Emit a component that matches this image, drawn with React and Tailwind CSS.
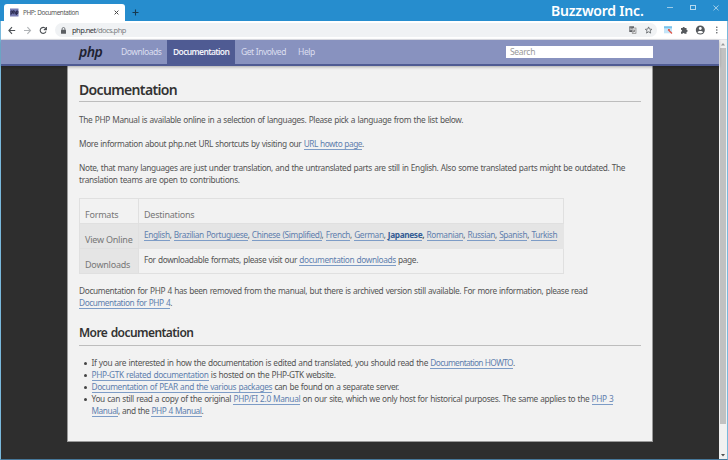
import React from "react";

function Link({ children, className = "" }) {
  return <a className={"inline-block h-[12px] border-b border-[#7d9cc6] leading-[12px] text-[#5f7fae] " + className}>{children}</a>;
}

function Line({ children, className = "" }) {
  return <div className={"h-[12px] whitespace-nowrap leading-[12px] [word-spacing:0.5px] " + className}>{children}</div>;
}

function Item({ children, className = "" }) {
  return (
    <li className="flex h-[12px] items-center">
      <span className="mr-[4.5px] ml-[5px] h-[3px] w-[3px] rounded-full bg-[#444]" />
      <Line className={className}>{children}</Line>
    </li>
  );
}

function HeadCell({ children, className = "" }) {
  return <div className={"border-r border-b border-[#e0e0e0] pt-[9px] pl-[5px] text-[9px] leading-[13px] tracking-[-0.22px] text-[#777] " + className}>{children}</div>;
}

function TitleBar() {
  return (
    <div className="flex h-[21px] items-end bg-[#268dce]">
      <div className="ml-[4px] flex h-[17px] w-[121px] items-center rounded-t-[3px] bg-white pl-[6px]">
        <svg width="9" height="9" viewBox="0 0 9 9">
          <rect y=".5" width="8.5" height="8" fill="#777bb3" />
          <path d="M1 6.8V3h1.6v2.2H1M3.8 2v4.2M3.8 3.8h1.5v2.4M6.4 7V3h1.5v2.4H6.4" fill="none" stroke="#222244" strokeWidth="0.9" />
        </svg>
        <span className="ml-[4px] w-[91px] text-[6.4px] leading-[10px] tracking-[-0.42px] [word-spacing:0.5px] whitespace-nowrap text-[#555]">PHP: Documentation</span>
        <svg className="mr-[6px] shrink-0" width="5" height="5" viewBox="0 0 5 5">
          <path d="M.6 .6L4.4 4.4M4.4 .6L.6 4.4" stroke="#444" strokeWidth="1" />
        </svg>
      </div>
      <svg className="mb-[5px] ml-[7px]" width="7" height="7" viewBox="0 0 7 7">
        <path d="M3.5 .5v6M.5 3.5h6" stroke="#17394f" strokeWidth="1.1" />
      </svg>
      <div className="ml-[412px] h-[21px] w-[94px] text-[14px] leading-[22px] font-semibold tracking-[-0.2px] whitespace-nowrap text-white">Buzzword Inc.</div>
      <svg className="mb-[10px] ml-[21px]" width="54" height="6" viewBox="0 0 54 6">
        <path d="M1 2.5h6" stroke="#9ccbe8" strokeWidth="1" />
        <rect x="24.5" y=".5" width="5" height="4" fill="none" stroke="#b5d9ef" />
        <path d="M47.5 .5l5 4.8M52.5 .5l-5 4.8" stroke="#a5d0ea" strokeWidth="1" />
      </svg>
    </div>
  );
}

function Toolbar() {
  return (
    <div className="flex h-[19px] items-center border-b border-[#e3e4ea] bg-white pl-[7px]">
      <svg width="40" height="9" viewBox="0 0 40 9" fill="none" strokeWidth="1.1">
        <path d="M7.2 4.5H1M4 1.2L.9 4.5 4 7.8" stroke="#4c5054" />
        <path d="M16 4.5h6.4M19.4 1.2l3.1 3.3-3.1 3.3" stroke="#b0b3b6" />
        <path d="M38 3.3A3 3 0 1 0 38 5.5M38.4 1v2.6h-2.6" stroke="#4c5054" />
      </svg>
      <div className="ml-[7px] flex h-[14px] w-[602px] items-center rounded-full bg-[#f0f2f4] pl-[6px]">
        <svg width="5" height="7" viewBox="0 0 5 7">
          <rect y="2.7" width="5" height="4" rx=".5" fill="#5c5f63" />
          <path d="M1.1 3V1.9a1.4 1.4 0 0 1 2.8 0V3" stroke="#5c5f63" strokeWidth=".8" fill="none" />
        </svg>
        <div className="ml-[6px] w-[557px] text-[7.5px] leading-[12px] tracking-[-0.54px] whitespace-nowrap text-[#7b7f83]">
          <span className="text-[#33363a]">php.net</span>/docs.php
        </div>
        <svg width="24" height="8" viewBox="0 0 24 8">
          <rect x=".3" y=".3" width="4.7" height="5.7" fill="#5c5f63" />
          <rect x="3.2" y="2" width="3.8" height="5.3" fill="#e8e9eb" stroke="#777" strokeWidth=".6" />
          <path d="M4 4h2.3M5.8 4c-.2 1-1 2-1.8 2.3M4.4 4.3l1.8 2" stroke="#777" strokeWidth=".5" />
          <path d="M1.2 3.2h2.2M3 3.2A1 1 0 1 1 2.6 2.2" stroke="#fff" strokeWidth=".5" fill="none" />
          <path d="M19.6 .9l.9 2.2 2.4.2-1.8 1.5.6 2.3-2.1-1.3-2.1 1.3.6-2.3-1.8-1.5 2.4-.2z" fill="none" stroke="#5c5f63" strokeWidth=".8" />
        </svg>
      </div>
      <svg className="ml-[7px]" width="56" height="10" viewBox="0 0 56 10">
        <rect y="1.3" width="8" height="7" fill="#c4e5f8" />
        <rect y="1.3" width="8" height="2" fill="#78c2ec" />
        <path d="M4 4.5l4 4M4 4.5l1.8.2" stroke="#e45243" strokeWidth="1.2" />
        <path d="M17 3h1.6a1.1 1.1 0 0 1 2.2 0h1.7v1.8a1.1 1.1 0 0 1 0 2.2v1.7h-1.9a1.1 1.1 0 0 0-2.1 0H17V6.8a1 1 0 0 0 0-2z" fill="#55595d" />
        <circle cx="36.3" cy="5" r="4.5" fill="#55595d" />
        <circle cx="36.3" cy="3.5" r="1.4" fill="#fff" />
        <path d="M33.5 7.2c.7-1.7 4.9-1.7 5.6 0-1 1.6-4.6 1.6-5.6 0z" fill="#fff" />
        <circle cx="52.8" cy="2.3" r=".8" fill="#55595d" />
        <circle cx="52.8" cy="5" r=".8" fill="#55595d" />
        <circle cx="52.8" cy="7.7" r=".8" fill="#55595d" />
      </svg>
    </div>
  );
}

function Nav() {
  return (
    <div className="relative z-10 flex h-[26px] border-b-2 border-[#4f5b93] bg-[#8892bf] text-[8.5px] leading-[23px] whitespace-nowrap text-[#dcdff0] shadow-[0_1px_3px_rgba(0,0,0,0.3)]">
      <div className="ml-[78px] w-[42px] text-[14px] leading-[23px] font-semibold tracking-[-0.55px] text-[#202231] italic">php</div>
      <div className="w-[46px] tracking-[-0.45px]">Downloads</div>
      <div className="h-[24px] w-[68px] bg-[#4f5b93] pl-[6px] font-semibold tracking-[-0.65px] text-[#f0f1f8]">Documentation</div>
      <div className="ml-[6px] w-[57px] tracking-[-0.5px] [word-spacing:0.5px]">Get Involved</div>
      <div className="tracking-[-0.4px]">Help</div>
      <div className="mt-[6px] ml-auto mr-[66px] h-[11.5px] w-[147px] bg-white pl-[4px] text-[8.5px] leading-[11px] tracking-[-0.3px] text-[#999]">Search</div>
    </div>
  );
}

function Page() {
  return (
    <main className="ml-[66px] h-[376px] w-[586px] border-x border-b border-[#999] bg-[#f2f2f2] pt-[14px] pl-[11px] text-[8.3px] text-[#555]">
      <h1 className="h-[22px] w-[562px] border-b border-[#bdbdbd] text-[14px] leading-[20px] font-semibold tracking-[-0.65px] text-[#333]">Documentation</h1>
      <Line className="mt-[12px] tracking-[-0.335px]">The PHP Manual is available online in a selection of languages. Please pick a language from the list below.</Line>
      <Line className="mt-[12px] tracking-[-0.36px]">More information about php.net URL shortcuts by visiting our <Link className="tracking-[-0.48px]">URL howto page</Link>.</Line>
      <Line className="mt-[12px] tracking-[-0.35px]">Note, that many languages are just under translation, and the untranslated parts are still in English. Also some translated parts might be outdated. The</Line>
      <Line className="tracking-[-0.31px]">translation teams are open to contributions.</Line>
      <div className="mt-[12px] grid h-[76px] w-[485px] grid-cols-[59px_425px] grid-rows-[25px_25px_25px] border-t border-l border-[#e0e0e0] whitespace-nowrap">
        <HeadCell>Formats</HeadCell>
        <HeadCell>Destinations</HeadCell>
        <HeadCell className="bg-[#e5e5e5]">View Online</HeadCell>
        <div className="border-r border-b border-[#e5e5e5] bg-[#e5e5e5] pt-[5px] pl-[5px]">
          <Line className="tracking-[-0.37px]">
            <Link>English</Link>, <Link>Brazilian Portuguese</Link>, <Link>Chinese (Simplified)</Link>, <Link>French</Link>, <Link>German</Link>, <b><Link className="text-[#335c94]">Japanese</Link>,</b> <Link>Romanian</Link>, <Link>Russian</Link>, <Link>Spanish</Link>, <Link>Turkish</Link>
          </Line>
        </div>
        <HeadCell className="bg-[#e5e5e5]">Downloads</HeadCell>
        <div className="border-r border-b border-[#e0e0e0] pt-[5px] pl-[5px]">
          <Line className="tracking-[-0.365px]">For downloadable formats, please visit our <Link>documentation downloads</Link> page.</Line>
        </div>
      </div>
      <Line className="mt-[11px] tracking-[-0.35px]">Documentation for PHP 4 has been removed from the manual, but there is archived version still available. For more information, please read</Line>
      <Line className="tracking-[-0.42px]"><Link>Documentation for PHP 4</Link>.</Line>
      <h2 className="mt-[14px] h-[23px] w-[562px] border-b border-[#bdbdbd] text-[12px] leading-[20px] font-semibold tracking-[-0.56px] [word-spacing:0.8px] text-[#333]">More documentation</h2>
      <ul className="mt-[11px]">
        <Item className="tracking-[-0.335px]">If you are interested in how the documentation is edited and translated, you should read the <Link className="tracking-[-0.63px]">Documentation HOWTO</Link>.</Item>
        <Item className="tracking-[-0.35px]"><Link>PHP-GTK related documentation</Link> is hosted on the PHP-GTK website.</Item>
        <Item className="tracking-[-0.365px]"><Link>Documentation of PEAR and the various packages</Link> can be found on a separate server.</Item>
        <Item className="tracking-[-0.345px]">You can still read a copy of the original <Link>PHP/FI 2.0 Manual</Link> on our site, which we only host for historical purposes. The same applies to the <Link>PHP 3</Link></Item>
      </ul>
      <Line className="pl-[12.5px] tracking-[-0.45px]"><Link>Manual</Link>, and the <Link>PHP 4 Manual</Link>.</Line>
    </main>
  );
}

export default function App() {
  return (
    <div className="h-[460px] w-[728px] overflow-hidden bg-[#268dce] font-['Noto_Sans',sans-serif]">
      <TitleBar />
      <div className="h-[439px] border-x border-b border-x-[#79b9dc] border-b-[#47789a]">
        <Toolbar />
        <div className="flex h-[419px]">
          <div className="w-[718px] bg-[#2e2e2e]">
            <Nav />
            <Page />
          </div>
          <div className="flex w-[8px] flex-col items-center bg-[#f1f1f1]">
            <svg width="8" height="8" viewBox="0 0 8 8"><path d="M2 5.5h4L4 3z" fill="#999" /></svg>
            <div className="h-[376px] w-[6px] bg-[#c1c1c1]" />
            <svg className="mt-auto" width="8" height="8" viewBox="0 0 8 8"><path d="M2 3h4L4 5.5z" fill="#505050" /></svg>
          </div>
        </div>
      </div>
    </div>
  );
}
